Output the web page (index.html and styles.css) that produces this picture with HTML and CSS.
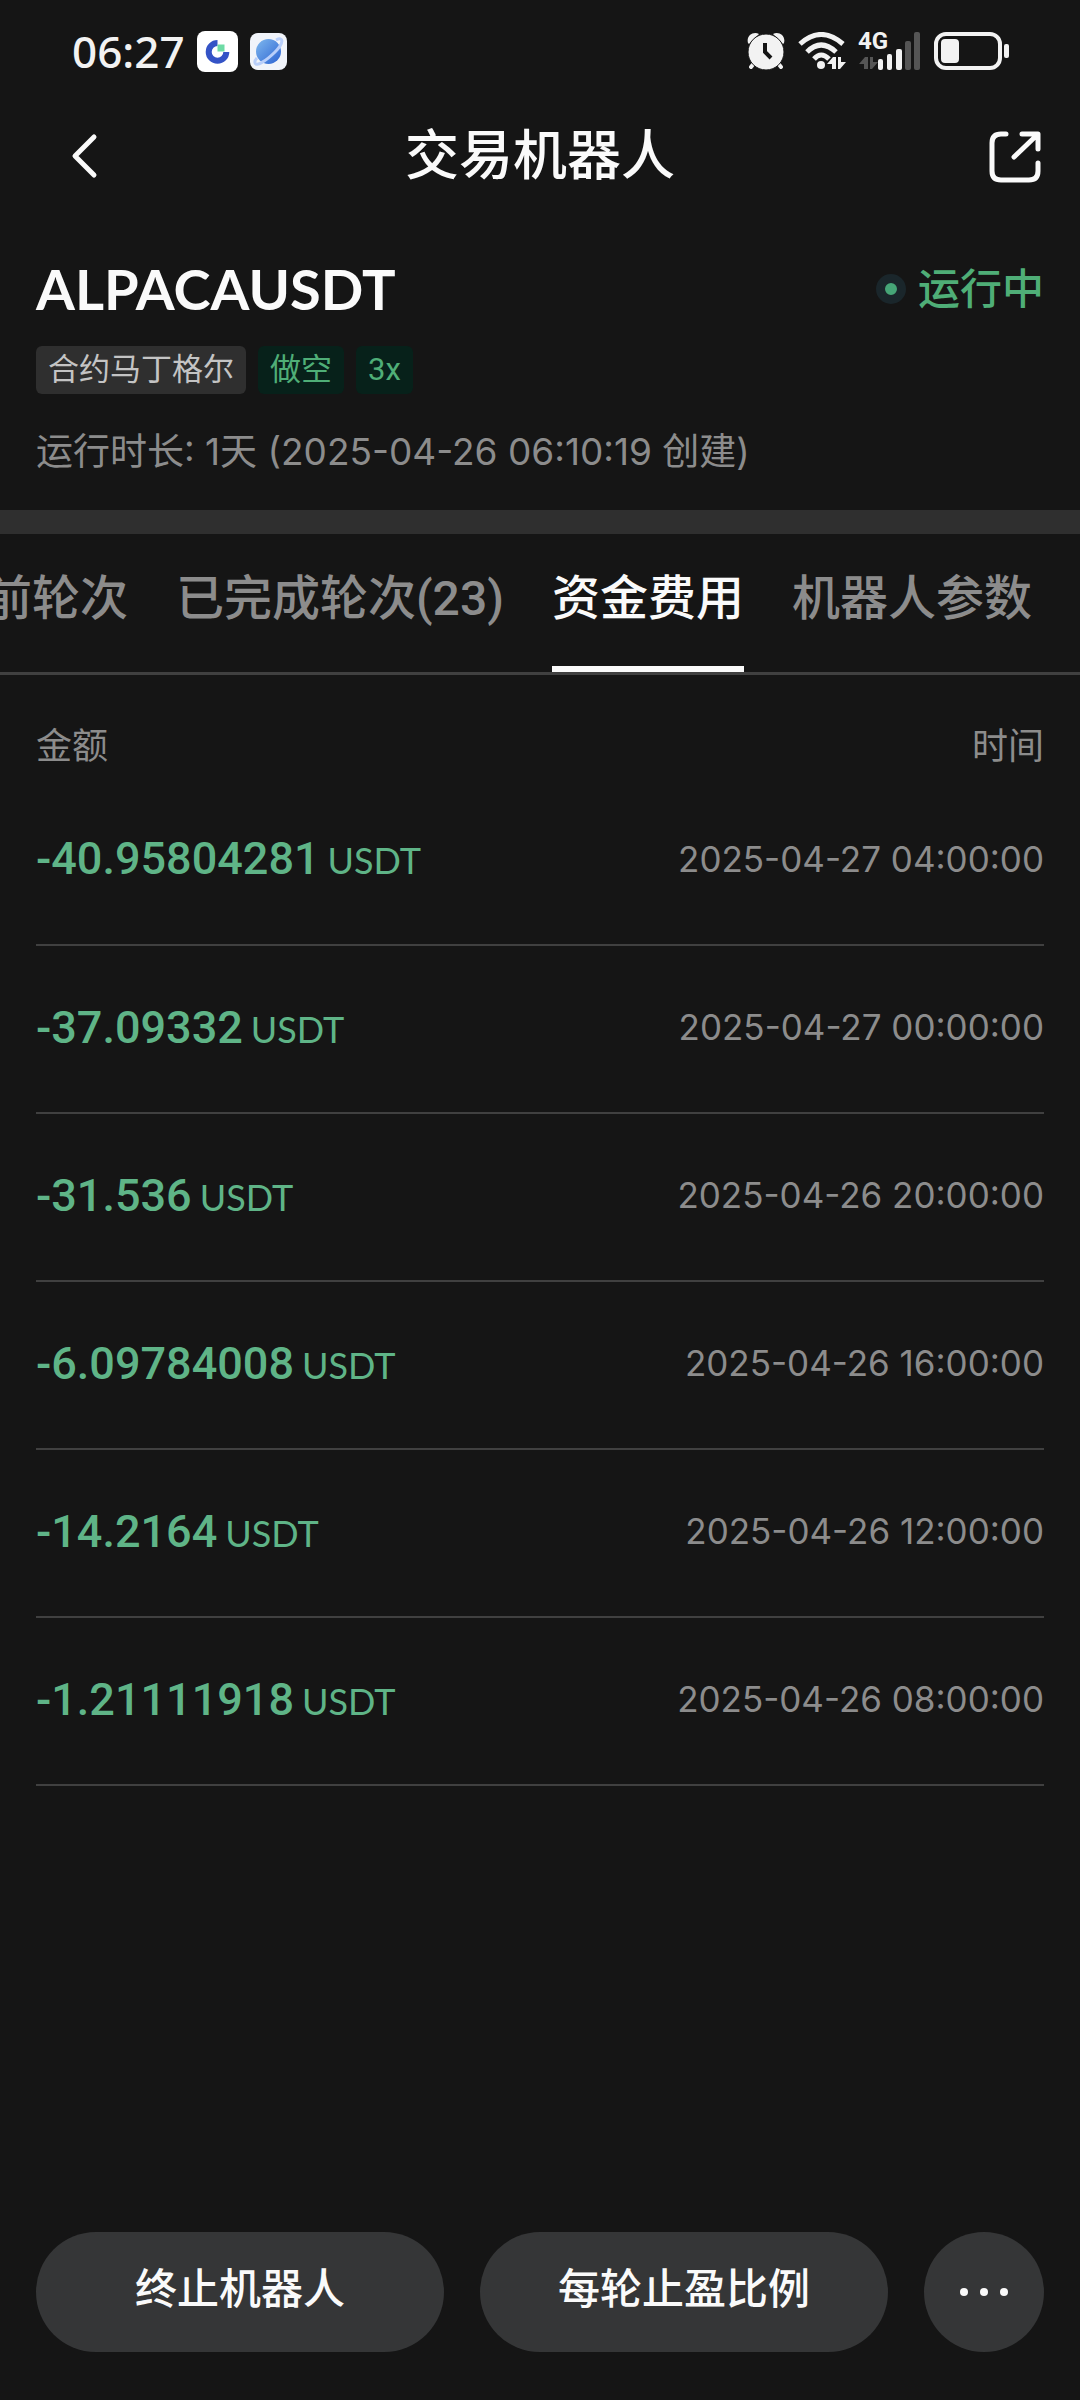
FILE: index.html
```html
<!DOCTYPE html>
<html lang="zh-CN">
<head>
<meta charset="utf-8">
<meta name="viewport" content="width=device-width, initial-scale=1">
<title>交易机器人</title>
<link rel="stylesheet" href="styles.css">
</head>
<body>
<div class="screen">
  <div class="status-bar">
    <div class="status-left">
      <span class="clock">06:27</span>
      <svg class="app-icon" width="41" height="41" viewBox="0 0 41 41" aria-hidden="true">
        <rect width="41" height="41" rx="8" fill="#fff"/>
        <path d="M20.500 12.100A8.800 8.800 0 1 0 29.300 20.900" fill="none" stroke="#3453c6" stroke-width="6"/>
        <rect x="20.500" y="13.500" width="7" height="7" fill="#6edba5"/>
      </svg>
      <svg class="app-icon planet" width="37" height="37" viewBox="0 0 37 37" aria-hidden="true">
        <defs><linearGradient id="globe" x1="0" y1="0" x2="1" y2="1"><stop offset="0" stop-color="#7fb8ee"/><stop offset="1" stop-color="#2c63d2"/></linearGradient></defs>
        <rect width="37" height="37" rx="8" fill="#f1f4fa"/>
        <circle cx="18.500" cy="18.500" r="12.500" fill="url(#globe)"/>
        <path d="M26 7C34 3 34 10 25 19C16 28 6 34 5 30C4.500 28 6 26 7 25" fill="none" stroke="#b9cffa" stroke-width="3"/>
      </svg>
    </div>
    <div class="status-right">
      <svg width="38" height="38" viewBox="0 0 38 38" aria-hidden="true">
        <path d="M8 30L4 35M30 30L34 35" stroke="#f2f2f2" stroke-width="4" stroke-linecap="round"/>
        <path d="M1 11C-1 4 6 -1 12 2L2 12ZM37 11C39 4 32 -1 26 2L36 12Z" fill="#f2f2f2"/>
        <circle cx="19" cy="20" r="18" fill="#f2f2f2" stroke="#151515" stroke-width="1"/>
        <path d="M18 11V20L24 26" fill="none" stroke="#151515" stroke-width="4"/>
      </svg>
      <svg class="wifi" width="48" height="38" viewBox="0 0 48 38" aria-hidden="true">
        <g fill="none" stroke="#f2f2f2" stroke-width="5">
          <path d="M2 12Q23 -7 45 12"/><path d="M9 20Q23 6 38 20"/><path d="M16 27Q23 19 31 27"/>
        </g>
        <circle cx="23" cy="33" r="4" fill="#f2f2f2"/>
        <path d="M29 32L35 25H38V37H34V32ZM40 25H43V30H48L42 37H40Z" fill="#f2f2f2"/>
      </svg>
      <div class="cellular">
        <span class="network">4G</span>
        <svg width="62" height="38" viewBox="0 0 62 38" aria-hidden="true">
          <path d="M0 32L6 25H9V37H5V32ZM11 25H14V30H19L13 37H11Z" fill="#555"/>
          <g fill="#f2f2f2"><rect x="19" y="27" width="5" height="11" rx="2"/><rect x="28" y="22" width="5" height="16" rx="2"/><rect x="37" y="17" width="6" height="21" rx="2"/></g>
          <g fill="#555"><rect x="46" y="9" width="6" height="29" rx="2"/><rect x="55" y="0" width="6" height="38" rx="2"/></g>
        </svg>
      </div>
      <svg class="battery" width="76" height="38" viewBox="0 0 76 38" aria-hidden="true">
        <rect x="2" y="2" width="64" height="34" rx="10" fill="none" stroke="#f2f2f2" stroke-width="4"/>
        <rect x="7" y="7" width="18" height="24" rx="4" fill="#f2f2f2"/>
        <rect x="70" y="12" width="5" height="14" rx="2" fill="#f2f2f2"/>
      </svg>
    </div>
  </div>

  <header class="nav">
    <button class="icon-button" type="button" aria-label="返回">
      <svg width="48" height="48" viewBox="0 0 48 48"><path d="M34 5L15 24L34 43" fill="none" stroke="#fafafa" stroke-width="5" stroke-linecap="round" stroke-linejoin="round"/></svg>
    </button>
    <h1 class="nav-title">交易机器人</h1>
    <button class="icon-button icon-share" type="button" aria-label="分享">
      <svg width="54" height="54" viewBox="0 0 54 54"><path d="M18 5H13Q4 5 4 14V42Q4 51 13 51H41Q50 51 50 42V34M34 5H50V20M49 6L26 28" fill="none" stroke="#fafafa" stroke-width="5" stroke-linecap="round" stroke-linejoin="round"/></svg>
    </button>
  </header>

  <section class="summary">
    <div class="summary-top">
      <h2 class="symbol">ALPACAUSDT</h2>
      <div class="state"><span class="state-dot"></span>运行中</div>
    </div>
    <div class="tags"><span class="tag">合约马丁格尔</span><span class="tag tag-green">做空</span><span class="tag tag-green">3x</span></div>
    <p class="runtime">运行时长: 1天 (2025-04-26 06:10:19 创建)</p>
  </section>

  <nav class="tabs">
    <button class="tab" type="button">当前轮次</button>
    <button class="tab" type="button">已完成轮次(23)</button>
    <button class="tab tab-active" type="button" aria-current="page">资金费用</button>
    <button class="tab" type="button">机器人参数</button>
  </nav>

  <main class="content">
    <table class="fees">
      <thead><tr><th scope="col">金额</th><th scope="col">时间</th></tr></thead>
      <tbody>
        <tr><td><span class="amount">-40.95804281</span><span class="unit">USDT</span></td><td>2025-04-27 04:00:00</td></tr>
        <tr><td><span class="amount">-37.09332</span><span class="unit">USDT</span></td><td>2025-04-27 00:00:00</td></tr>
        <tr><td><span class="amount">-31.536</span><span class="unit">USDT</span></td><td>2025-04-26 20:00:00</td></tr>
        <tr><td><span class="amount">-6.09784008</span><span class="unit">USDT</span></td><td>2025-04-26 16:00:00</td></tr>
        <tr><td><span class="amount">-14.2164</span><span class="unit">USDT</span></td><td>2025-04-26 12:00:00</td></tr>
        <tr><td><span class="amount">-1.21111918</span><span class="unit">USDT</span></td><td>2025-04-26 08:00:00</td></tr>
      </tbody>
    </table>
  </main>

  <footer class="actions">
    <button class="action" type="button">终止机器人</button>
    <button class="action" type="button">每轮止盈比例</button>
    <button class="more" type="button" aria-label="更多">
      <svg width="52" height="12" viewBox="0 0 52 12"><g fill="#fafafa"><circle cx="6" cy="6" r="4"/><circle cx="26" cy="6" r="4"/><circle cx="46" cy="6" r="4"/></g></svg>
    </button>
  </footer>
</div>
</body>
</html>
```
FILE: styles.css
```css
* { box-sizing: border-box; }

body {
  margin: 0;
  background: #151515;
  color: #fafafa;
  font-family: Inter, "Noto Sans CJK SC", sans-serif;
  font-size: 36px;
}

button {
  border: 0;
  padding: 0;
  background: none;
  color: inherit;
  font: inherit;
}

svg { display: block; flex: none; }
h1, h2, p { margin: 0; }

.screen {
  display: flex;
  flex-direction: column;
  min-height: 100vh;
  overflow: hidden;
}

.status-bar {
  display: flex;
  justify-content: space-between;
  align-items: center;
  height: 102px;
  padding: 0 70px 0 72px;
}

.status-left, .status-right { display: flex; align-items: center; }
.status-left { gap: 12px; }
.status-right { gap: 13px; }

.clock {
  font-family: "Noto Sans", sans-serif;
  font-size: 44px;
  font-weight: 500;
  line-height: 60px;
  color: #f2f2f2;
}

.cellular { position: relative; }

.network {
  position: absolute;
  top: -5px;
  left: -1px;
  font-family: Roboto, sans-serif;
  font-size: 24px;
  font-weight: 700;
  line-height: 28px;
  color: #f2f2f2;
}

.nav {
  display: grid;
  grid-template-columns: 1fr auto 1fr;
  align-items: center;
  height: 108px;
  padding: 0 38px;
}

.icon-button { display: flex; padding-left: 22px; }
.icon-share { justify-self: end; padding-left: 0; }

.nav-title {
  font-size: 54px;
  font-weight: 500;
  line-height: 80px;
}

.summary {
  padding: 42px 36px 32px;
  border-bottom: 24px solid #2f2f2f;
}

.summary-top {
  display: flex;
  justify-content: space-between;
  align-items: center;
  height: 74px;
}

.symbol {
  font-family: Lato, sans-serif;
  font-size: 56px;
  font-weight: 700;
  line-height: 72px;
}

.state {
  display: flex;
  align-items: center;
  gap: 12px;
  color: #4fae77;
  font-size: 42px;
  font-weight: 500;
  line-height: 60px;
}

.state-dot {
  width: 30px;
  height: 30px;
  border: 9px solid #1a262b;
  border-radius: 50%;
  background: #46a577;
}

.tags { display: flex; gap: 12px; margin-top: 20px; }

.tag {
  height: 48px;
  padding: 0 12px;
  border-radius: 6px;
  background: #2f2f2f;
  color: #c4c4c4;
  font-family: Roboto, "Noto Sans CJK SC", sans-serif;
  font-size: 31px;
  line-height: 48px;
}

.tag-green { background: #07211a; color: #4fae77; }

.runtime {
  margin-top: 32px;
  color: #8c8c8c;
  font-size: 37px;
  line-height: 52px;
}

.tabs {
  display: flex;
  justify-content: flex-end;
  gap: 48px;
  height: 141px;
  padding-right: 48px;
  border-bottom: 3px solid #404040;
}

.tab {
  flex: none;
  padding-bottom: 12px;
  border-bottom: 6px solid transparent;
  color: #8c8c8c;
  font-family: Roboto, "Noto Sans CJK SC", sans-serif;
  font-size: 48px;
  font-weight: 500;
  white-space: nowrap;
}

.tab-active { border-color: #fafafa; color: #fafafa; }

.content { flex: 1; padding: 34px 36px; }

.fees { width: 100%; border-collapse: collapse; color: #8c8c8c; }

.fees th { height: 68px; padding: 0; font-size: 36px; font-weight: 400; text-align: left; }
.fees td { height: 168px; padding: 0 0 4px; border-bottom: 2px solid #404040; font-size: 35px; }
.fees th:last-child, .fees td:last-child { text-align: right; }

.amount {
  margin-right: 8px;
  color: #5fb487;
  font-family: Roboto, sans-serif;
  font-size: 45px;
  font-weight: 500;
}

.unit { color: #5fb487; font-family: Lato, sans-serif; font-size: 36px; }

.actions { display: flex; gap: 36px; padding: 0 36px 48px; }

.action {
  flex: 1;
  height: 120px;
  padding-bottom: 14px;
  border-radius: 60px;
  background: #353637;
  font-size: 42px;
  font-weight: 500;
}

.more {
  display: grid;
  place-items: center;
  width: 120px;
  height: 120px;
  border-radius: 50%;
  background: #353637;
}
```
